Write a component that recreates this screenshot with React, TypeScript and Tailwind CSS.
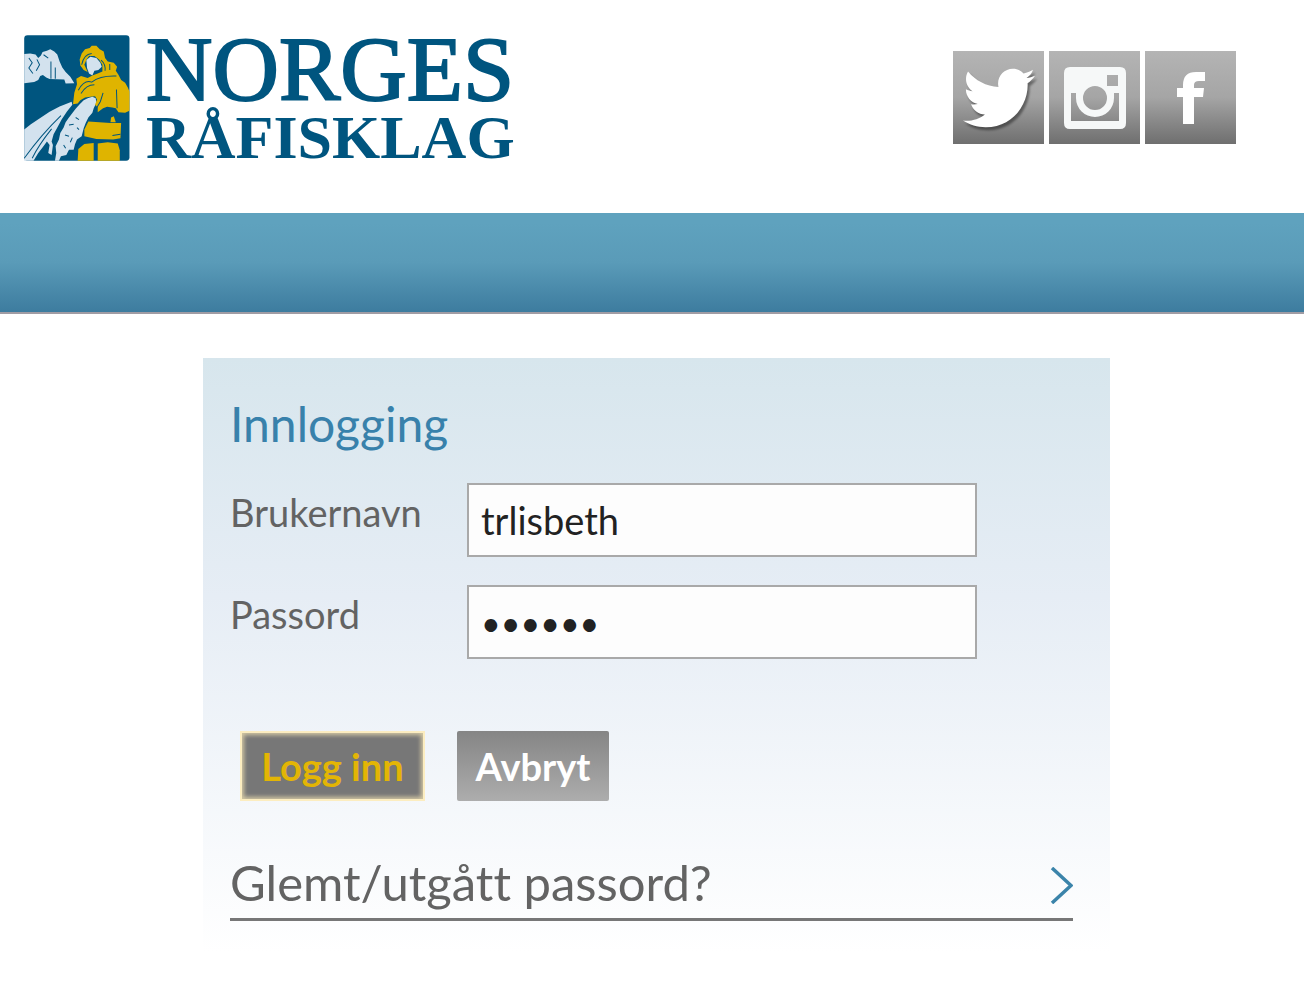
import { FaTwitter } from 'react-icons/fa';

const fields = [
  { id: 'username', label: 'Brukernavn', type: 'text', value: 'trlisbeth', size: 'text-[38px]' },
  { id: 'password', label: 'Passord', type: 'password', value: '123456', size: 'text-[34px]' },
];

const FishermanLogo = () => (
  <svg className="w-[106px] h-[126px] shrink-0" viewBox="42 43 316 377" aria-hidden="true">
    <rect x="42" y="44" width="315" height="375" rx="10" fill="#00557f" />
    {/* mountains */}
    <g fill="#d3e2ee">
      <path d="M42 100 L60 98 L76 101 L84 112 L92 104 L97 94 L110 90 L120 86 L132 92 L141 101 L148 122 L156 140 L166 154 L180 168 L192 187 L166 188 L162 176 L118 175 L108 170 L98 163 L90 166 L84 178 L72 184 L42 187Z" />
      {/* net and rope */}
      <path d="M42 326 L62 310 L90 291 L118 273 L148 257 L184 243 L186 252 L170 272 L154 296 L142 318 L130 340 L124 362 L128 372 L124 402 L114 396 L118 372 L110 362 L98 378 L84 396 L70 419 L42 419Z" />
      <path d="M196 264 L208 250 L220 238 L232 232 L246 228 L256 232 L258 246 L250 262 L246 276 L234 290 L226 306 L220 322 L214 346 L200 356 L194 370 L190 386 L176 386 L168 402 L152 406 L146 419 L134 419 L138 396 L136 376 L146 356 L150 336 L160 320 L166 304 L176 290Z" />
      <path d="M228 118 L240 108 L258 112 L270 126 L274 138 L264 148 L252 150 L246 164 L236 158 L230 142Z" />
    </g>
    <g fill="none" stroke="#00557f" strokeWidth="3">
      <path d="M122 174 V122 M135 174 V140 M56 112 L66 126 L56 142 L68 158 M80 116 L88 132 L78 150 M100 102 L114 112" />
      <path d="M42 412 Q92 342 152 284 M66 412 Q84 374 124 324" />
      <path d="M196 290 L206 296 M176 312 L190 310 M200 320 L206 326 M164 342 L176 346 M186 350 L180 364 M160 372 L166 382" />
    </g>
    {/* oilskins */}
    <g fill="#dfb400">
      <path d="M210 134 L208 116 L214 98 L224 86 L238 82 L244 75 L258 75 L268 86 L280 92 L284 112 L292 122 L310 126 L320 138 L316 150 L324 162 L332 178 L344 186 L352 200 L357 212 L357 270 L344 276 L324 274 L316 262 L306 260 L290 258 L278 262 L262 274 L262 260 L254 252 L260 236 L254 226 L240 228 L224 230 L210 238 L202 248 L188 250 L192 216 L200 190 L198 174 L212 166 L232 172 L246 164 L262 158 L276 152 L276 132 L266 116 L252 106 L236 106 L228 118 L222 132 L232 154 L220 148Z" />
      <path d="M234 302 L300 306 L332 306 L330 352 L308 356 L258 354 L222 346 L222 326Z" />
      <path d="M222 369 L250 366 L250 419 L202 419 L204 384Z" />
      <path d="M262 368 L292 364 L322 368 L328 388 L328 419 L262 419Z" />
      <path d="M302 290 L310 286 L316 304 L300 304Z" />
    </g>
    <g fill="none" stroke="#00557f" strokeWidth="3">
      <path d="M214 132 Q220 100 244 98 M272 118 Q286 130 284 150 M298 130 V148" />
      <path d="M204 208 Q222 176 244 184 Q270 164 318 166 M212 218 Q228 192 252 192" />
      <path d="M278 216 L270 242 L258 262 M318 206 L320 262 M306 344 L330 340" />
    </g>
  </svg>
);

const InstagramIcon = () => (
  <svg className="w-[62px] h-[62px]" viewBox="0 0 62 62" aria-hidden="true">
    <path
      fill="#f6f8f8"
      fillRule="evenodd"
      d="M6 0H56Q62 0 62 6V56Q62 62 56 62H6Q0 62 0 56V6Q0 0 6 0Z M43 8V19H54V8Z M7 26V54H55V26H50V31A19 19 0 0 1 12 31V26Z M31 19A12 12 0 1 0 31 43A12 12 0 1 0 31 19Z"
    />
  </svg>
);

const FacebookIcon = () => (
  <svg className="w-[28px] h-[52px]" viewBox="0 0 28 52" aria-hidden="true">
    <path
      fill="#fff"
      d="M6 52V25H0V16H6V13Q6 0 19 0H28V9H22Q17 9 17 13V16H27L26 25H17V52Z"
    />
  </svg>
);

const tile =
  'flex items-center justify-center w-[91px] h-[93px] bg-linear-to-b from-[#b4b4b4] via-[#a5a5a5] to-[#6f6f6f]';

const App = () => {
  return (
    <div className="bg-white font-[Lato,'Open_Sans',sans-serif] text-[#636363]">
      <header className="flex items-start justify-between pl-6 pr-[68px] h-[213px]">
        <a href="#" className="flex text-[#00557f] font-['Liberation_Serif',serif]">
          <span className="pt-[35px]">
            <FishermanLogo />
          </span>
          <span className="flex flex-col pl-4 pt-8 whitespace-nowrap">
            <span className="text-[92px] leading-[74px] [-webkit-text-stroke:2px_#00557f]">
              NORGES
            </span>
            <span className="text-[62px] leading-[62px] font-bold">RÅFISKLAG</span>
          </span>
        </a>
        <nav className="flex gap-[5px] pt-[51px]">
          <a href="#" aria-label="Twitter" className={tile}>
            <FaTwitter className="w-[72px] h-[72px] text-white drop-shadow-[2px_3px_1px_#00000066]" />
          </a>
          <a href="#" aria-label="Instagram" className={tile}>
            <InstagramIcon />
          </a>
          <a href="#" aria-label="Facebook" className={tile}>
            <FacebookIcon />
          </a>
        </nav>
      </header>

      <div className="h-[101px] border-b-2 border-[#a09ca4] bg-linear-to-b from-[#5fa2be] from-10% via-[#5a9bb8] via-50% to-[#3d7c9f]" />

      <main className="pt-11 pl-[203px] pr-[194px]">
        <form
          className="pt-[38px] pl-[27px] pr-[37px] pb-8 bg-linear-to-b from-[#d7e6ed] via-[#e6edf5] via-40% to-white"
          onSubmit={(e) => e.preventDefault()}
        >
          <h1 className="text-[48px] leading-[56px] text-[#3881ab]">Innlogging</h1>

          <div className="flex flex-col gap-7 pt-[31px]">
            {fields.map((field) => (
              <div className="flex" key={field.id}>
                <label
                  htmlFor={field.id}
                  className="w-[237px] shrink-0 pt-[7px] text-[38px] leading-[44px]"
                >
                  {field.label}
                </label>
                <input
                  id={field.id}
                  type={field.type}
                  defaultValue={field.value}
                  className={`w-[510px] h-[74px] px-3 border-2 border-[#a9a9a9] bg-[#fdfdfd] text-[#222] ${field.size}`}
                />
              </div>
            ))}
          </div>

          <div className="flex gap-8 pl-[10px] pt-[72px] text-[38px] leading-[44px] font-bold">
            <button
              type="submit"
              className="w-[185px] h-[70px] border-2 border-[#fcedc0] bg-[#777] text-[#e3b505] shadow-[inset_0_0_4px_2px_#d5c9a4]"
            >
              Logg inn
            </button>
            <button
              type="button"
              className="w-[152px] h-[70px] rounded-xs bg-linear-to-b from-[#858585] to-[#adadad] text-white"
            >
              Avbryt
            </button>
          </div>

          <a
            href="#"
            className="flex items-center justify-between mt-[48px] h-[72px] pb-1 border-b-3 border-[#777] text-[49px] leading-[56px] [font-variant-ligatures:none]"
          >
            Glemt/utgått passord?
            <svg className="w-[23px] h-[37px] mt-2" viewBox="0 0 23 37" aria-hidden="true">
              <path d="M2 1 L21 18.5 L2 36" fill="none" stroke="#3b84aa" strokeWidth="3.5" />
            </svg>
          </a>
        </form>
      </main>
    </div>
  );
};

export default App;
